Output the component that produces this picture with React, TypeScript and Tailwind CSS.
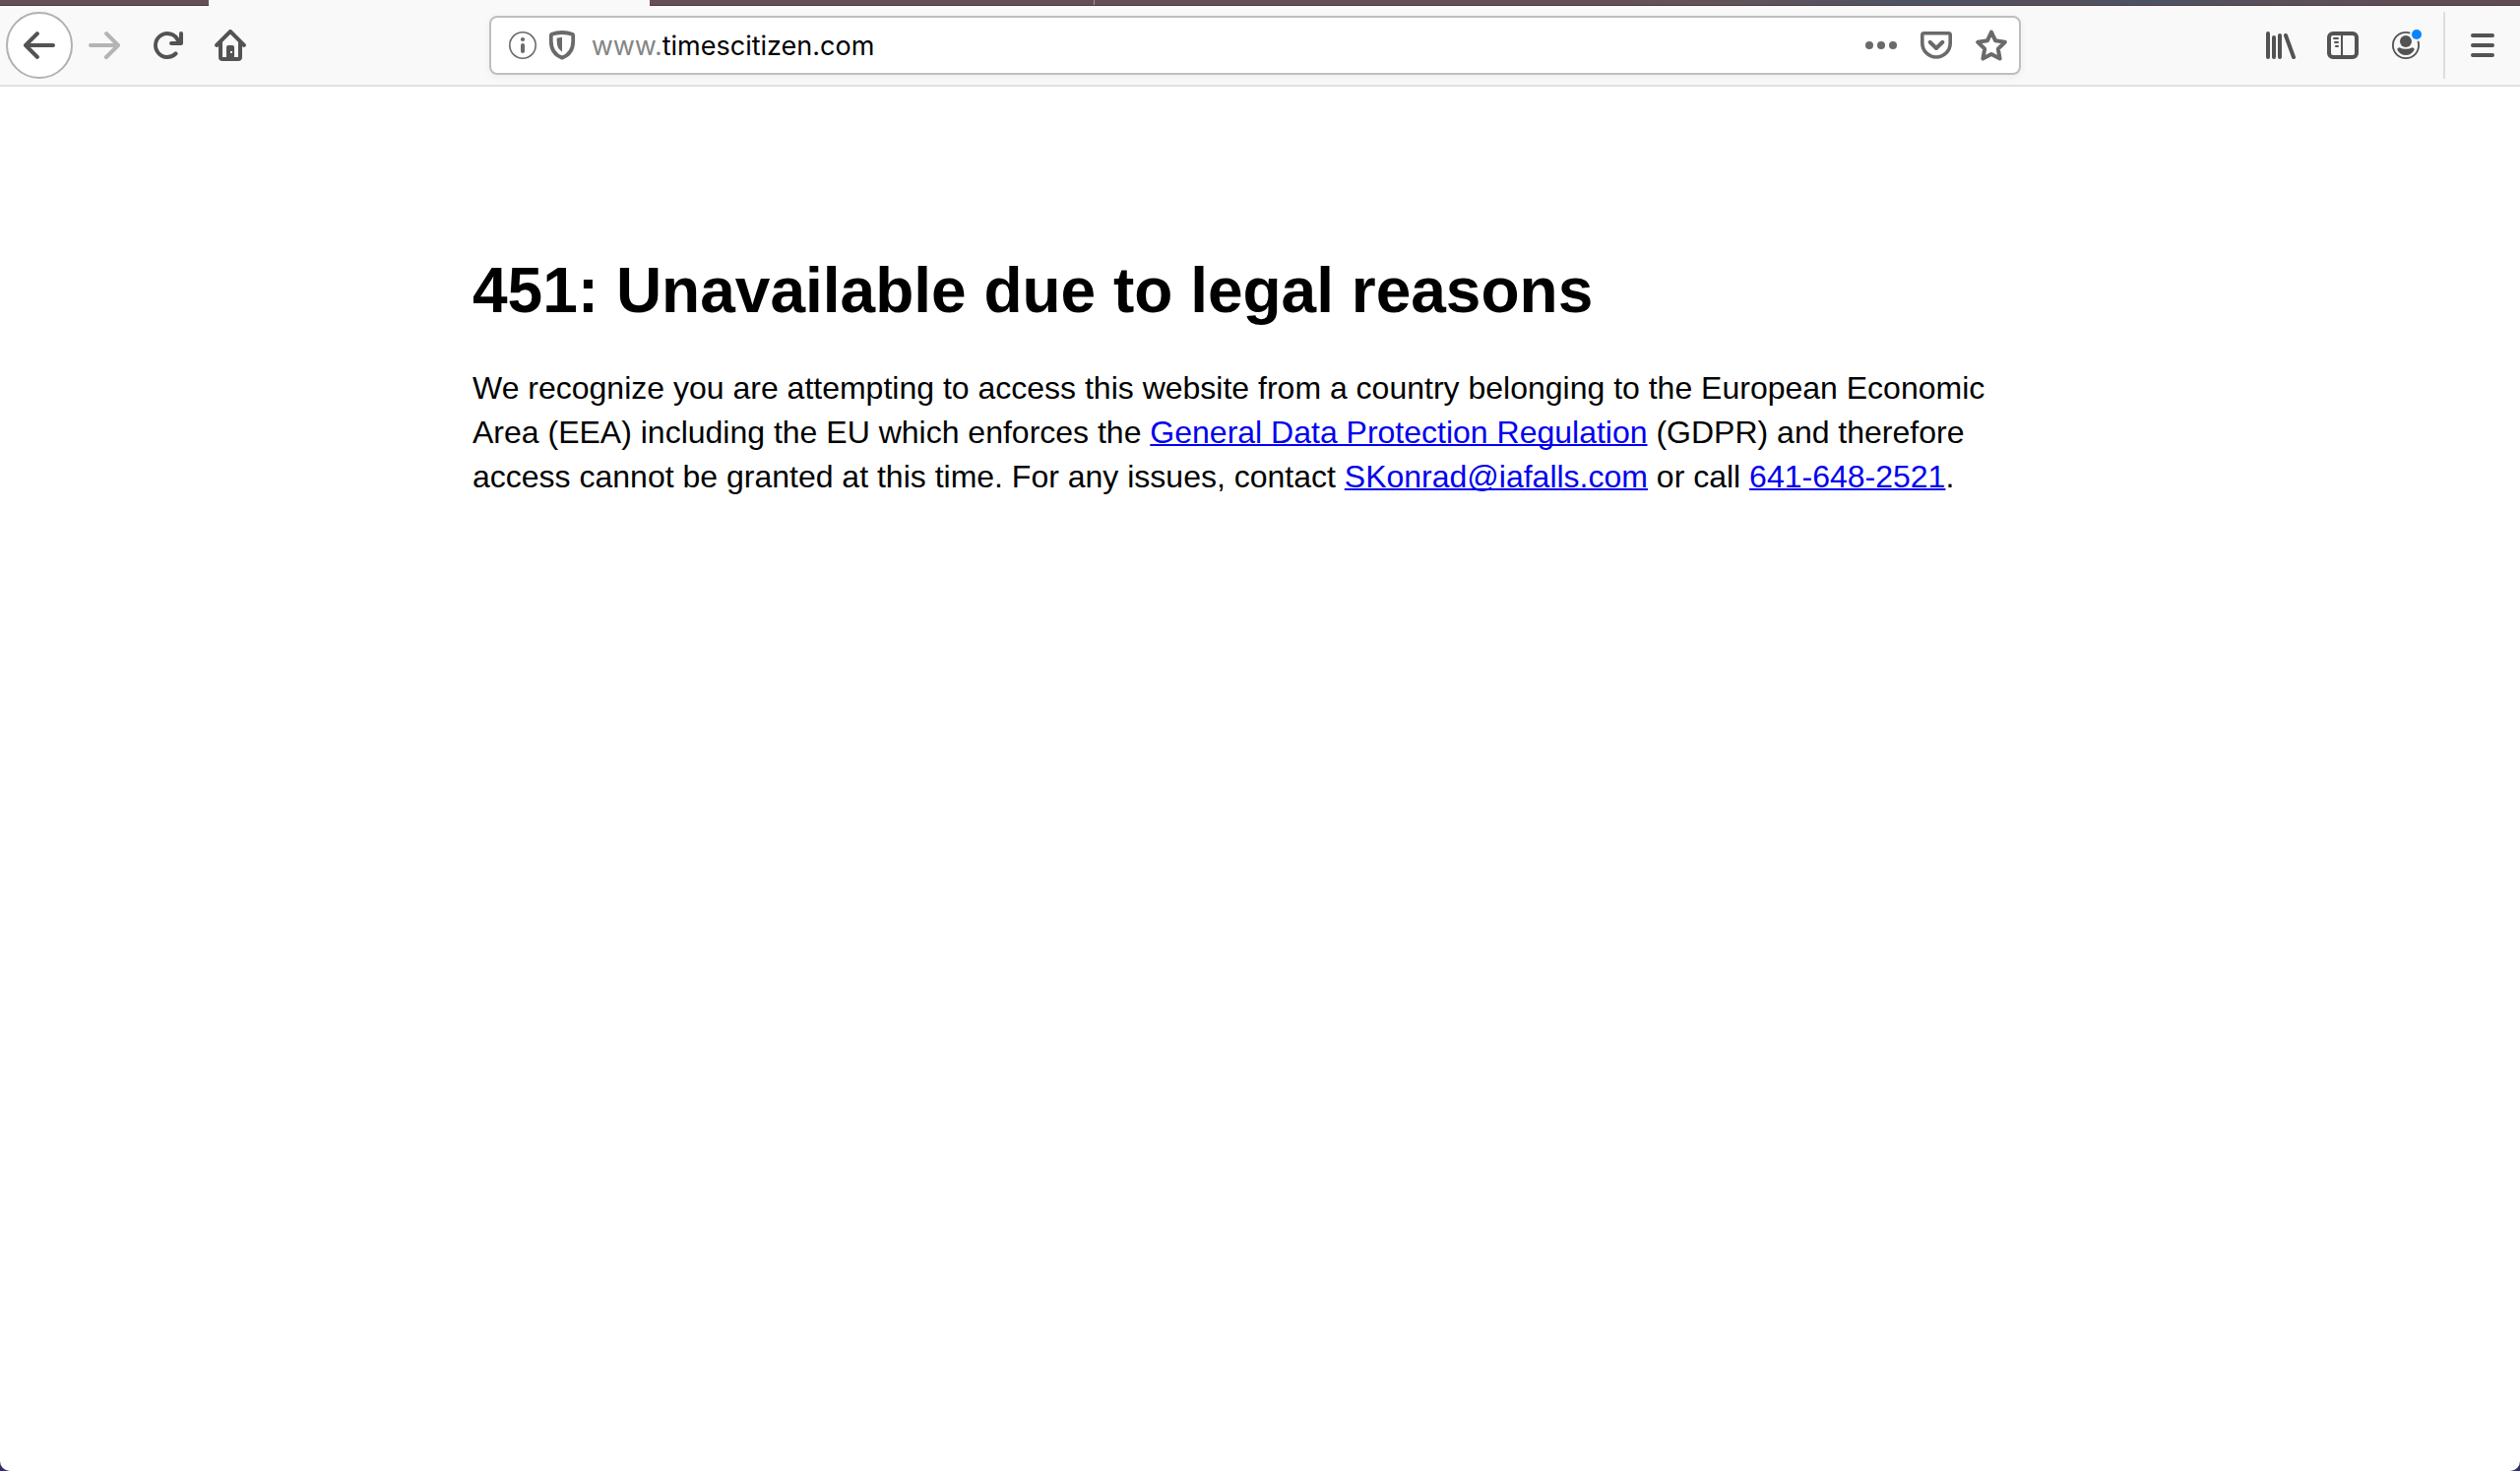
import type { ReactNode } from "react";

function Icon({ children }: { children: ReactNode }) {
  return (
    <svg viewBox="0 0 32 32" className="size-8 shrink-0" fill="currentColor" aria-hidden="true">
      {children}
    </svg>
  );
}

function ToolButton({ label, disabled, children }: { label: string; disabled?: boolean; children: ReactNode }) {
  return (
    <button
      type="button"
      aria-label={label}
      disabled={disabled}
      className="flex h-16 w-16 shrink-0 items-center justify-center rounded-lg text-[#535354] disabled:text-[#b4b4b5]"
    >
      <Icon>{children}</Icon>
    </button>
  );
}

function FieldButton({ label, children }: { label: string; children: ReactNode }) {
  return (
    <button type="button" aria-label={label} className="flex shrink-0 items-center text-[#6a6a6a]">
      <Icon>{children}</Icon>
    </button>
  );
}

function TabStrip() {
  return (
    <div className="flex h-[6px] bg-[#f9f9fa]">
      <div className="w-[212px] shrink-0 border-b border-[#52343f] bg-[#654f56]" />
      <div className="w-[448px] shrink-0" />
      <div className="flex flex-1 border-b border-[#52343f] bg-[linear-gradient(to_right,#654f56_0%,#654f56_49%,#60545a_58%,#4c5364_68%,#55505e_75%,#4b5363_80%,#5b5059_88%,#604d53_100%)]">
        <div className="w-[452px] border-r border-[#a1959a]" />
      </div>
    </div>
  );
}

function AddressBar() {
  return (
    <div className="flex h-[60px] w-full items-center rounded-lg border-2 border-[#bebebe] bg-white pr-3 pl-4 shadow-[0_2px_8px_rgba(0,0,0,0.05)]">
      <FieldButton label="Site information">
        <circle cx="16" cy="16" r="13.2" fill="none" stroke="currentColor" strokeWidth="1.6" />
        <circle cx="16" cy="10" r="2.1" />
        <rect x="14" y="14" width="4" height="10" rx="2" />
      </FieldButton>
      <div className="w-2 shrink-0" />
      <FieldButton label="Tracking protection">
        <path
          d="M16 3 C11.5 3 8 3.8 5.6 4.7 C5 5 4.8 5.3 4.8 6 V12 C4.8 21 9 26 16 28.6 C23 26 27.2 21 27.2 12 V6 C27.2 5.3 27 5 26.4 4.7 C24 3.8 20.5 3 16 3 Z"
          fill="none"
          stroke="currentColor"
          strokeWidth="3.8"
          strokeLinejoin="round"
        />
        <path d="M16 7.8 C13.8 7.9 11.8 8.4 10.7 8.8 V12 C10.7 17 12.6 20.6 16 22.4 Z" />
      </FieldButton>
      <label className="ml-[14px] flex min-w-0 flex-1 items-center pt-[2px] font-[Inter,sans-serif] text-[27px] leading-9">
        <span className="text-[#858585]">www.</span>
        <input
          type="text"
          aria-label="Address"
          defaultValue="timescitizen.com"
          className="min-w-0 flex-1 bg-transparent text-black outline-none"
        />
      </label>
      <div className="flex items-center gap-6">
        <FieldButton label="Page actions">
          <circle cx="4" cy="16" r="4" />
          <circle cx="16" cy="16" r="4" />
          <circle cx="28" cy="16" r="4" />
        </FieldButton>
        <FieldButton label="Save to Pocket">
          <path
            d="M3.5 3.7 H28.5 Q30.2 3.7 30.2 5.4 V13.8 A14.2 14.2 0 0 1 1.8 13.8 V5.4 Q1.8 3.7 3.5 3.7 Z"
            fill="none"
            stroke="currentColor"
            strokeWidth="3.6"
          />
          <path d="M9.6 12.8 L16 19 L22.4 12.8" fill="none" stroke="currentColor" strokeWidth="4" strokeLinecap="round" strokeLinejoin="round" />
        </FieldButton>
        <FieldButton label="Bookmark this page">
          <path
            d="M16 2.6 L20 11.2 L29.8 12.8 L22.8 19.6 L24.6 29.6 L16 25 L7.4 29.6 L9.2 19.6 L2.2 12.8 L12 11.2 Z"
            fill="none"
            stroke="currentColor"
            strokeWidth="4"
            strokeLinejoin="round"
          />
        </FieldButton>
      </div>
    </div>
  );
}

function Toolbar() {
  return (
    <header className="flex h-[82px] items-center border-b-2 border-[#e1e1e2] bg-[#f9f9fa] px-[6px]">
      <button
        type="button"
        aria-label="Back"
        className="flex size-[68px] shrink-0 items-center justify-center rounded-full border-2 border-[#b1b1b1] bg-white text-[#535354]"
      >
        <Icon>
          <path d="M30 14H6.83l8.58-8.59a2 2 0 0 0-2.82-2.82l-12 12a2 2 0 0 0 0 2.82l12 12a2 2 0 0 0 2.82-2.82L6.83 18H30a2 2 0 0 0 0-4z" />
        </Icon>
      </button>
      <ToolButton label="Forward" disabled>
        <path d="M31.41 14.59l-12-12a2 2 0 0 0-2.82 2.82L25.17 14H2a2 2 0 0 0 0 4h23.17l-8.58 8.59a2 2 0 1 0 2.82 2.82l12-12a2 2 0 0 0 0-2.82z" />
      </ToolButton>
      <ToolButton label="Reload">
        <path d="M30 2a2 2 0 0 0-2 2v4.84A13.99 13.99 0 1 0 16 30a13.9 13.9 0 0 0 9.9-4.1 2 2 0 0 0-2.83-2.83A10.04 10.04 0 1 1 25.1 12H20a2 2 0 0 0 0 4h10a2 2 0 0 0 2-2V4a2 2 0 0 0-2-2z" />
      </ToolButton>
      <ToolButton label="Home">
        <path
          fillRule="evenodd"
          d="M31.41 14.59l-14-14a2 2 0 0 0-2.82 0l-14 14a2 2 0 0 0 2.82 2.82L4 16.83V28a4 4 0 0 0 4 4h16a4 4 0 0 0 4-4V16.83l.59.58a2 2 0 0 0 2.82-2.82zM24 28h-4V18a2 2 0 0 0-2-2h-4a2 2 0 0 0-2 2v10H8V12.83l8-8 8 8zM16 22h2v2h-2z"
        />
      </ToolButton>
      <div className="grow-[4] basis-0" />
      <div className="flex min-w-0 grow-[27] basis-0">
        <AddressBar />
      </div>
      <div className="grow-[4] basis-0" />
      <ToolButton label="Library">
        <rect x="2" y="2" width="4" height="28" rx="2" />
        <rect x="8" y="6" width="4" height="24" rx="2" />
        <rect x="14" y="4" width="4" height="26" rx="2" />
        <path d="M22 6 L30 28" stroke="currentColor" strokeWidth="4" strokeLinecap="round" />
      </ToolButton>
      <ToolButton label="Sidebars">
        <path
          fillRule="evenodd"
          d="M6 2H26a6 6 0 0 1 6 6V24a6 6 0 0 1-6 6H6a6 6 0 0 1-6-6V8a6 6 0 0 1 6-6zM6 6a2 2 0 0 0-2 2V24a2 2 0 0 0 2 2h8V6zM16 6V26h10a2 2 0 0 0 2-2V8a2 2 0 0 0-2-2z"
        />
        <path d="M7 9h4M8 13h3M9 17h2" stroke="currentColor" strokeWidth="2" strokeLinecap="round" />
      </ToolButton>
      <ToolButton label="Account">
        <circle cx="16" cy="16" r="13.1" fill="none" stroke="currentColor" strokeWidth="1.8" />
        <circle cx="16" cy="12" r="6" />
        <path d="M9.4 18.2 Q16 21.4 22.6 18.2 Q25.4 19 24.4 21 Q21.6 26 16 26 Q10.4 26 7.6 21 Q6.6 19 9.4 18.2 Z" />
        <circle cx="27" cy="5" r="7" fill="#f9f9fa" />
        <circle cx="27" cy="5" r="5" fill="#0a84ff" />
      </ToolButton>
      <div className="mx-[6px] h-[68px] w-[2px] shrink-0 bg-[#dededf]" />
      <ToolButton label="Open menu">
        <rect x="4" y="4" width="24" height="4" rx="2" />
        <rect x="4" y="14" width="24" height="4" rx="2" />
        <rect x="4" y="24" width="24" height="4" rx="2" />
      </ToolButton>
    </header>
  );
}

export default function App() {
  return (
    <div className="min-h-screen bg-[#312e6b]">
      <div className="flex min-h-screen flex-col overflow-hidden rounded-b-[10px] bg-white">
        <TabStrip />
        <Toolbar />
        <main className="mx-auto w-full max-w-[1600px] pt-[170px] font-['Liberation_Sans',Arial,sans-serif] text-black">
          <h1 className="mb-10 text-[64px] leading-[74px] font-bold">451: Unavailable due to legal reasons</h1>
          <p className="text-[32px] leading-[45px] [&_a]:text-[#0000ee] [&_a]:underline [&_a]:decoration-2 [&_a]:[text-decoration-skip-ink:none]">
            We recognize you are attempting to access this website from a country belonging to the European Economic Area
            (EEA) including the EU which enforces the <a href="#gdpr">General Data Protection Regulation</a> (GDPR) and
            therefore access cannot be granted at this time. For any issues, contact{" "}
            <a href="mailto:SKonrad@iafalls.com">SKonrad@iafalls.com</a> or call{" "}
            <a href="tel:641-648-2521">641-648-2521</a>.
          </p>
        </main>
      </div>
    </div>
  );
}
